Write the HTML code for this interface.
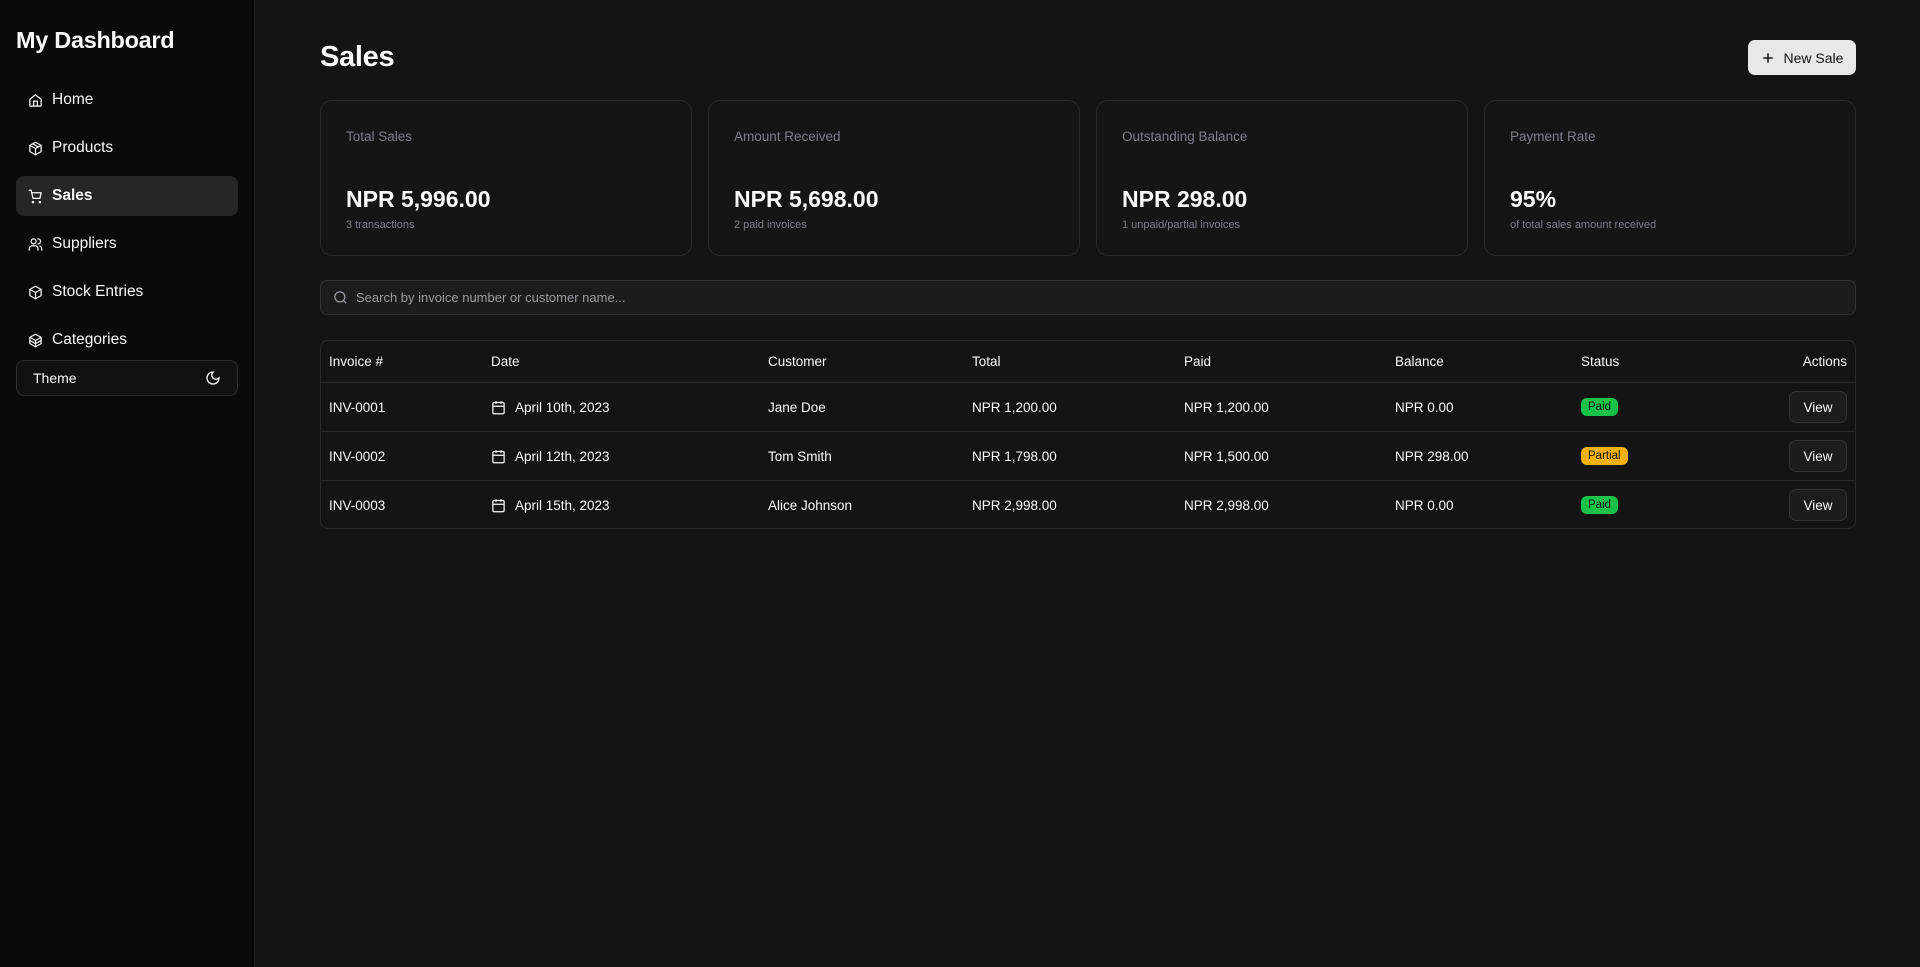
<!DOCTYPE html>
<html><head><meta charset="utf-8"><style>
*{box-sizing:border-box;margin:0;padding:0}
body{width:1920px;height:967px;background:#141414;color:#fafafa;font-family:"Liberation Sans",sans-serif;position:relative;overflow:hidden}
.side{position:absolute;left:0;top:0;width:255px;height:967px;background:#0a0a0a;border-right:1px solid #1f1f1f}
.side h1{position:absolute;left:16px;top:27px;font-size:23.5px;font-weight:700;letter-spacing:-0.3px}
.nav{position:absolute;left:16px;width:222px;height:40px;display:flex;align-items:center;padding-left:12px;font-size:15.5px;border-radius:8px}
.nav svg{width:15px;height:15px;margin-right:9px;fill:none;stroke:#fafafa;stroke-width:2;stroke-linecap:round;stroke-linejoin:round}
.nav.act{background:#262626;font-weight:700}
.theme{position:absolute;left:16px;top:360px;width:222px;height:36px;border:1px solid #2e2e2e;border-radius:8px;display:flex;align-items:center;justify-content:space-between;padding:0 16px;font-size:14px;background:#111}
.main h2{position:absolute;left:320px;top:41px;font-size:29px;font-weight:700;letter-spacing:-0.3px}
.btn{position:absolute;left:1748px;top:40px;width:108px;height:35px;background:#e8e8e8;color:#111;border-radius:7px;font-size:14px;display:flex;align-items:center;justify-content:center;gap:9px}
.card{position:absolute;top:100px;width:372px;height:156px;border:1px solid #2a2a2a;border-radius:12px;background:#151515}
.card .l{position:absolute;left:25px;top:28px;font-size:13.5px;color:#7c7f89}
.card .v{position:absolute;left:25px;top:85px;font-size:23px;font-weight:700}
.card .s{position:absolute;left:25px;top:118px;font-size:11px;color:#7c7f89}
.search{position:absolute;left:320px;top:280px;width:1536px;height:35px;border:1px solid #333;border-radius:7px;background:#1c1c1c;display:flex;align-items:center;padding-left:12px;font-size:13px;color:#9a9ca3}
.tbl{position:absolute;left:320px;top:340px;width:1536px;height:189px;border:1px solid #2a2a2a;border-radius:8px}
.row{position:absolute;left:0;width:1534px;height:49px;border-top:1px solid #2a2a2a;font-size:13.5px}
.row div{position:absolute;top:0;height:100%;display:flex;align-items:center}
.hd{top:0;border-top:none;height:41px}
.badge{padding:3px 7px;border-radius:6px;font-size:11.5px;color:#111}
.view{position:absolute;right:8px;top:8px;width:58px;height:32px;border:1px solid #333;border-radius:7px;background:#1c1c1c;display:flex;align-items:center;justify-content:center}
.cal{width:15px;height:15px;margin-right:9px;fill:none;stroke:#fafafa;stroke-width:2}
</style></head><body>
<div class="side">
<h1>My Dashboard</h1>
<div class="nav" style="top:80px"><svg viewBox="0 0 24 24"><path d="M3 10l9-7 9 7v10a1 1 0 0 1-1 1H4a1 1 0 0 1-1-1z"/><path d="M9 21v-8h6v8"/></svg>Home</div>
<div class="nav" style="top:128px"><svg viewBox="0 0 24 24"><path d="M12 2l9 5v10l-9 5-9-5V7z"/><path d="M3 7l9 5 9-5M12 12v10M7.5 4.5l9 5"/></svg>Products</div>
<div class="nav act" style="top:176px"><svg viewBox="0 0 24 24"><circle cx="8" cy="21" r="1"/><circle cx="19" cy="21" r="1"/><path d="M2 2h3l3 13h11l2-9H6"/></svg>Sales</div>
<div class="nav" style="top:224px"><svg viewBox="0 0 24 24"><circle cx="9" cy="7" r="4"/><path d="M2 21v-2a5 5 0 0 1 5-5h4a5 5 0 0 1 5 5v2M16 3a4 4 0 0 1 0 8M22 21v-2a5 5 0 0 0-3-4.5"/></svg>Suppliers</div>
<div class="nav" style="top:272px"><svg viewBox="0 0 24 24"><path d="M12 2l9 5v10l-9 5-9-5V7z"/><path d="M3 7l9 5 9-5M12 12v10"/></svg>Stock Entries</div>
<div class="nav" style="top:320px"><svg viewBox="0 0 24 24"><path d="M12 2l9 5v10l-9 5-9-5V7z"/><path d="M3 7l9 5 9-5M3 12l9 5 9-5M12 12v10"/></svg>Categories</div>
<div class="theme">Theme<svg width="16" height="16" viewBox="0 0 24 24" fill="none" stroke="#fafafa" stroke-width="2"><path d="M12 3a6 6 0 0 0 9 9 9 9 0 1 1-9-9z"/></svg></div>
</div>
<div class="main">
<h2>Sales</h2>
<div class="btn"><svg width="14" height="14" viewBox="0 0 24 24" stroke="#111" stroke-width="2.5"><path d="M12 4v16M4 12h16"/></svg>New Sale</div>
<div class="card" style="left:320px"><div class="l">Total Sales</div><div class="v">NPR 5,996.00</div><div class="s">3 transactions</div></div>
<div class="card" style="left:708px"><div class="l">Amount Received</div><div class="v">NPR 5,698.00</div><div class="s">2 paid invoices</div></div>
<div class="card" style="left:1096px"><div class="l">Outstanding Balance</div><div class="v">NPR 298.00</div><div class="s">1 unpaid/partial invoices</div></div>
<div class="card" style="left:1484px"><div class="l">Payment Rate</div><div class="v">95%</div><div class="s">of total sales amount received</div></div>
<div class="search"><svg width="15" height="15" viewBox="0 0 24 24" fill="none" stroke="#9a9ca3" stroke-width="2" style="margin-right:8px"><circle cx="11" cy="11" r="8"/><path d="M21 21l-4.3-4.3"/></svg>Search by invoice number or customer name...</div>
<div class="tbl">
<div class="row hd"><div style="left:8px">Invoice #</div><div style="left:170px">Date</div><div style="left:447px">Customer</div><div style="left:651px">Total</div><div style="left:863px">Paid</div><div style="left:1074px">Balance</div><div style="left:1260px">Status</div><div style="right:8px">Actions</div></div>
<div class="row" style="top:41px"><div style="left:8px">INV-0001</div><div style="left:170px"><svg class="cal" viewBox="0 0 24 24"><rect x="3" y="4" width="18" height="18" rx="2"/><path d="M8 2v4M16 2v4M3 10h18"/></svg>April 10th, 2023</div><div style="left:447px">Jane Doe</div><div style="left:651px">NPR 1,200.00</div><div style="left:863px">NPR 1,200.00</div><div style="left:1074px">NPR 0.00</div><div style="left:1260px"><span class="badge" style="background:#16c24a">Paid</span></div><span class="view">View</span></div>
<div class="row" style="top:90px"><div style="left:8px">INV-0002</div><div style="left:170px"><svg class="cal" viewBox="0 0 24 24"><rect x="3" y="4" width="18" height="18" rx="2"/><path d="M8 2v4M16 2v4M3 10h18"/></svg>April 12th, 2023</div><div style="left:447px">Tom Smith</div><div style="left:651px">NPR 1,798.00</div><div style="left:863px">NPR 1,500.00</div><div style="left:1074px">NPR 298.00</div><div style="left:1260px"><span class="badge" style="background:#f2b20c">Partial</span></div><span class="view">View</span></div>
<div class="row" style="top:139px"><div style="left:8px">INV-0003</div><div style="left:170px"><svg class="cal" viewBox="0 0 24 24"><rect x="3" y="4" width="18" height="18" rx="2"/><path d="M8 2v4M16 2v4M3 10h18"/></svg>April 15th, 2023</div><div style="left:447px">Alice Johnson</div><div style="left:651px">NPR 2,998.00</div><div style="left:863px">NPR 2,998.00</div><div style="left:1074px">NPR 0.00</div><div style="left:1260px"><span class="badge" style="background:#16c24a">Paid</span></div><span class="view">View</span></div>
</div>
</div>
</body></html>
